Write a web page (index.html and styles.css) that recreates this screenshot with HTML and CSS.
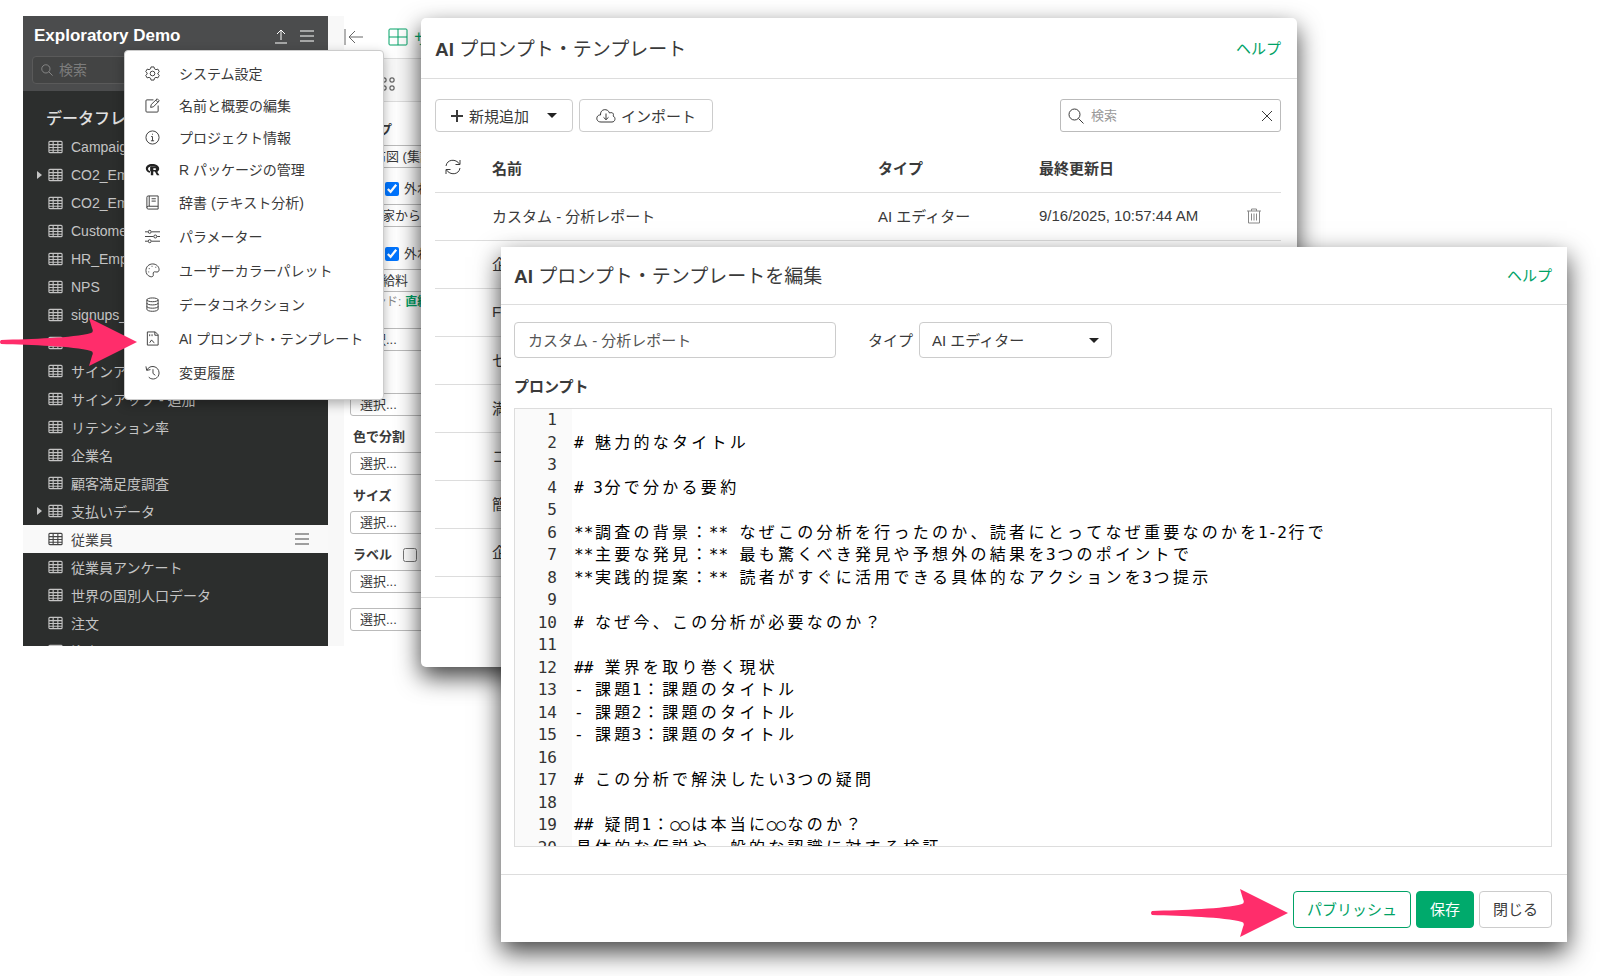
FILE: index.html
```html
<!DOCTYPE html>
<html lang="ja">
<head>
    <meta charset="UTF-8">
    <meta name="viewport" content="width=device-width, initial-scale=1.0">
    <title>AI プロンプト・テンプレート</title>
    <link rel="stylesheet" href="styles.css">
</head>
<body>
    <svg class="sprite" aria-hidden="true">
        <symbol id="i-table" viewBox="0 0 16 14">
            <rect x="1" y="1" width="14" height="12" rx="1"/>
            <path d="M1 4.5h14M1 7.5h14M1 10.5h14M5.5 1v12M10.5 1v12"/>
        </symbol>
        <symbol id="i-search" viewBox="0 0 16 16">
            <circle cx="6.5" cy="6.5" r="5.5"/><path d="M10.5 10.5l5 5"/>
        </symbol>
        <symbol id="i-arrow" viewBox="0 0 138 50">
            <path d="M2 23C32 22 74 21 92 16Q95 15 93 11L90 1L138 25L90 49L93 39Q95 35 92 34C74 29 32 28 2 27Q0 25 2 23Z"/>
        </symbol>
    </svg>

    <!-- Project window -->
    <div class="project">
        <aside class="sidebar">
            <div class="sidebar-head">
                <div class="sidebar-title">
                    <h2>Exploratory Demo</h2>
                    <button class="icon-button" aria-label="アップロード">
                        <svg width="14" height="16" viewBox="0 0 14 16"><path d="M7 12V2M3 6l4-4 4 4M1 15h12"/></svg>
                    </button>
                    <button class="icon-button" aria-label="メニュー">
                        <svg width="14" height="12" viewBox="0 0 14 12"><path d="M0 1h14M0 6h14M0 11h14"/></svg>
                    </button>
                </div>
                <label class="sidebar-search">
                    <svg width="12" height="12"><use href="#i-search"/></svg>
                    <input type="text" placeholder="検索" aria-label="検索">
                </label>
            </div>
            <h3>データフレーム</h3>
            <ul class="frames">
                <li><svg><use href="#i-table"/></svg>Campaign</li>
                <li class="has-children"><svg><use href="#i-table"/></svg>CO2_Emission</li>
                <li><svg><use href="#i-table"/></svg>CO2_Emission</li>
                <li><svg><use href="#i-table"/></svg>Customer</li>
                <li><svg><use href="#i-table"/></svg>HR_Employee</li>
                <li><svg><use href="#i-table"/></svg>NPS</li>
                <li><svg><use href="#i-table"/></svg>signups_</li>
                <li><svg><use href="#i-table"/></svg></li>
                <li><svg><use href="#i-table"/></svg>サインアップ</li>
                <li><svg><use href="#i-table"/></svg>サインアップ - 追加</li>
                <li><svg><use href="#i-table"/></svg>リテンション率</li>
                <li><svg><use href="#i-table"/></svg>企業名</li>
                <li><svg><use href="#i-table"/></svg>顧客満足度調査</li>
                <li class="has-children"><svg><use href="#i-table"/></svg>支払いデータ</li>
                <li class="selected"><svg><use href="#i-table"/></svg>従業員
                    <button class="icon-button" aria-label="従業員のメニュー">
                        <svg width="14" height="12" viewBox="0 0 14 12"><path d="M0 1h14M0 6h14M0 11h14"/></svg>
                    </button>
                </li>
                <li><svg><use href="#i-table"/></svg>従業員アンケート</li>
                <li><svg><use href="#i-table"/></svg>世界の国別人口データ</li>
                <li><svg><use href="#i-table"/></svg>注文</li>
                <li><svg><use href="#i-table"/></svg>注文</li>
            </ul>
        </aside>

        <section class="chart">
            <div class="chart-tabs">
                <svg width="20" height="16" viewBox="0 0 20 16"><path d="M1 0v16M19 8H5M11 2L5 8l6 6"/></svg>
                <span class="chart-tab">
                    <svg width="20" height="18" viewBox="0 0 20 18"><rect x="1" y="1" width="18" height="16" rx="1"/><path d="M1 9h18M10 1v16"/></svg>
                    サ
                </span>
            </div>
            <div class="chart-tools">
                <svg width="14" height="14" viewBox="0 0 14 14"><rect x="1" y="1" width="4" height="4" rx="1"/><rect x="9" y="1" width="4" height="4" rx="1"/><rect x="1" y="9" width="4" height="4" rx="1"/><rect x="9" y="9" width="4" height="4" rx="1"/></svg>
            </div>
            <div class="chart-form">
                <label class="row tall" for="chart-type">タイプ</label>
                <select id="chart-type"><option>散布図 (集計)</option></select>
                <label class="row check indent"><input type="checkbox" checked>外れ値</label>
                <select class="with-icon" aria-label="X軸"><option>家からの距離</option></select>
                <label class="row check indent tall"><input type="checkbox" checked>外れ値</label>
                <select class="with-icon" aria-label="Y軸"><option>給料</option></select>
                <div class="row trend">トレンド: <b>直線</b></div>
                <select aria-label="計算"><option>選択...</option></select>
                <div class="row tall"></div>
                <select aria-label="繰り返し"><option>選択...</option></select>
                <label class="row" for="color-by">色で分割</label>
                <select id="color-by"><option>選択...</option></select>
                <label class="row" for="size-by">サイズ</label>
                <select id="size-by"><option>選択...</option></select>
                <div class="row check"><label for="label-by">ラベル</label><input type="checkbox" aria-label="ラベルを表示"></div>
                <select id="label-by"><option>選択...</option></select>
                <select class="spaced" aria-label="追加ラベル"><option>選択...</option></select>
            </div>
        </section>
    </div>

    <!-- Project menu -->
    <ul class="menu">
        <li><svg viewBox="0 0 16 16"><path d="M6.4 1h3.2l.5 2 1.6.9 2-.6 1.5 2.8L13.700 7.500v1L15.200 10l-1.500 2.700-2-.6-1.600.9-.5 2H6.400l-.5-2-1.600-.9-2 .6L.8 10l1.500-1.500v-1L.8 6l1.500-2.700 2 .6 1.600-.9z"/><circle cx="8" cy="8" r="2.500"/></svg>システム設定</li>
        <li><svg viewBox="0 0 16 16"><path d="M9 2H2Q1 2 1 3v11q0 1 1 1h11q1 0 1-1V8M6 10l.6-3L13 .8 15.200 3 9 9.400zM11.500 2.200l2.200 2.300"/></svg>名前と概要の編集</li>
        <li><svg viewBox="0 0 16 16"><circle cx="8" cy="8" r="7"/><path d="M6.500 7H8v4.500M6.300 11.500h3.400M7.500 4.500h1"/></svg>プロジェクト情報</li>
        <li><svg class="r-icon" viewBox="0 0 18 16"><path class="solid" fill-rule="evenodd" d="M8.500 1.500C13.300 1.500 17 3.800 17 7c0 1.600-.9 2.900-2.300 3.900L13 10V5H6v6.900C2.900 11.100 1 9.300 1 7c0-3.200 3.200-5.500 7.500-5.500zM9 4C6 4 3.600 5.300 3.600 7S5 9.800 7 10.200V4.800h7.500C13.300 4.300 11.200 4 9 4z"/><path class="solid" fill-rule="evenodd" d="M7 4.500h6c3.600 0 3.700 4.600 1 5.300L17.300 15h-3l-2.400-4.500h-2V15H7zM10 6.500v2.200h2.500c1.500 0 1.500-2.200 0-2.200z"/></svg>R パッケージの管理</li>
        <li><svg viewBox="0 0 16 16"><path d="M3.500 1H14v14H3.500Q2 15 2 13.500v-11Q2 1 3.500 1zM4.500 1v11M2 13.500Q2 12 3.500 12H14M7 4h4.500M7 6.500h4.500"/></svg>辞書 (テキスト分析)</li>
        <li><svg viewBox="0 0 16 16"><path d="M0 3h3M7 3h9M0 8h9M13 8h3M0 13h3M7 13h9"/><circle cx="5" cy="3" r="1.600"/><circle cx="11" cy="8" r="1.600"/><circle cx="5" cy="13" r="1.600"/></svg>パラメーター</li>
        <li><svg viewBox="0 0 16 16"><path d="M5.500 14.500C2.500 13.500 1 11 1 8c0-4 3.200-7 7.200-7S15 4 15 7c0 2.300-1.500 3-3.500 2.500C9.500 9 8.300 10 8.800 12s-.8 3.200-3.300 2.500z"/><path d="M4 6h1M7 3.500h1M11 4.500h1M3.500 9.500h1"/></svg>ユーザーカラーパレット</li>
        <li><svg viewBox="0 0 16 16"><ellipse cx="8" cy="3" rx="6" ry="2"/><path d="M2 3v10c0 3 12 3 12 0V3M2 6.500c0 2.600 12 2.600 12 0M2 10c0 2.600 12 2.600 12 0"/></svg>データコネクション</li>
        <li><svg viewBox="0 0 16 16"><path d="M2.500 1H11l3 3v11H2.500zM10.500 1v3.500H14M5 12.500l2-3 1.500 2 1.500 1M5 3.500v2M7.500 3.500v2"/></svg>AI プロンプト・テンプレート</li>
        <li><svg viewBox="0 0 16 16"><path d="M2 5.500C5-1 15 1 15 8.500c0 6-7 8.500-11 4.500M1 1.500l.8 4.200 4-.8M8.500 4.500V9l2.500 2"/></svg>変更履歴</li>
    </ul>

    <!-- Template list -->
    <section class="dialog list-dialog">
        <header>
            <h1><b>AI</b> プロンプト・テンプレート</h1>
            <a href="#">ヘルプ</a>
        </header>
        <div class="list-body">
            <div class="toolbar">
                <button class="button add-button">
                    <svg width="12" height="12" viewBox="0 0 12 12"><path class="plus" d="M6 0v12M0 6h12"/></svg>
                    新規追加
                    <i class="caret"></i>
                </button>
                <button class="button import-button">
                    <svg width="20" height="14" viewBox="0 0 20 14"><path d="M5 13C-1 13 0 5.500 4.500 6 4-.5 12-1 13.500 4c4-1.500 4.500 2 3.500 3 3 1 2.500 6-1 6zM10 4.500v6M7.500 8.300L10 10.700l2.500-2.400"/></svg>
                    インポート
                </button>
                <label class="search">
                    <svg width="16" height="16"><use href="#i-search"/></svg>
                    <input type="text" placeholder="検索" aria-label="テンプレートを検索">
                    <button class="icon-button" aria-label="クリア">
                        <svg width="10" height="10" viewBox="0 0 10 10"><path d="M0 0l10 10M10 0L0 10"/></svg>
                    </button>
                </label>
            </div>
            <table>
                <thead>
                    <tr>
                        <th class="col-icon">
                            <button class="icon-button" aria-label="更新">
                                <svg width="16" height="16" viewBox="0 0 16 16"><path d="M1 7C2 0 11-.5 14.500 5M15 1v4.500h-4.500M15 9c-1 7-10 7.500-13.500 2M1 15v-4.500h4.500"/></svg>
                            </button>
                        </th>
                        <th>名前</th>
                        <th class="col-type">タイプ</th>
                        <th class="col-date">最終更新日</th>
                        <th class="col-action"></th>
                    </tr>
                </thead>
                <tbody>
                    <tr>
                        <td></td>
                        <td>カスタム - 分析レポート</td>
                        <td>AI エディター</td>
                        <td>9/16/2025, 10:57:44 AM</td>
                        <td>
                            <button class="icon-button trash" aria-label="削除">
                                <svg width="14" height="16" viewBox="0 0 14 16"><path d="M0 3h14M4.500 3V1h5v2M1.500 3v12h11V3M4.500 5.500v7M7 5.500v7M9.500 5.500v7"/></svg>
                            </button>
                        </td>
                    </tr>
                    <tr><td></td><td>企</td><td></td><td></td><td></td></tr>
                    <tr><td></td><td>F</td><td></td><td></td><td></td></tr>
                    <tr><td></td><td>セ</td><td></td><td></td><td></td></tr>
                    <tr><td></td><td>満</td><td></td><td></td><td></td></tr>
                    <tr><td></td><td>コ</td><td></td><td></td><td></td></tr>
                    <tr><td></td><td>簡</td><td></td><td></td><td></td></tr>
                    <tr><td></td><td>企</td><td></td><td></td><td></td></tr>
                </tbody>
            </table>
        </div>
        <footer></footer>
    </section>

    <!-- Template editor -->
    <section class="dialog edit-dialog">
        <header>
            <h1><b>AI</b> プロンプト・テンプレートを編集</h1>
            <a href="#">ヘルプ</a>
        </header>
        <div class="edit-body">
            <div class="fields">
                <input class="name-input" type="text" value="カスタム - 分析レポート" aria-label="名前">
                <label for="template-type">タイプ</label>
                <span class="type-select">
                    <select id="template-type"><option>AI エディター</option></select>
                    <i class="caret"></i>
                </span>
            </div>
            <div class="prompt-label" id="prompt-label">プロンプト</div>
            <div class="editor">
                <div class="gutter" id="gutter"></div>
                <div class="code" id="code" role="textbox" aria-multiline="true" aria-labelledby="prompt-label" contenteditable="true" spellcheck="false"></div>
            </div>
        </div>
        <footer>
            <button class="button publish">パブリッシュ</button>
            <button class="button save">保存</button>
            <button class="button">閉じる</button>
        </footer>
    </section>

    <svg class="arrow arrow-menu"><use href="#i-arrow"/></svg>
    <svg class="arrow arrow-publish"><use href="#i-arrow"/></svg>

    <script src="script.js"></script>
</body>
</html>
```

FILE: styles.css
```css
* {
    box-sizing: border-box;
}
body {
    margin: 0;
    min-height: 100vh;
    position: relative;
    overflow: hidden;
    background: #fff;
    color: #3a3a3a;
    font-family: "Liberation Sans", "Noto Sans CJK JP", sans-serif;
    font-size: 15px;
}
h1, h2, h3, ul {
    margin: 0;
    padding: 0;
    list-style: none;
}
button, input, select {
    font: inherit;
    color: inherit;
}
svg {
    flex: none;
    fill: none;
    stroke: currentColor;
    stroke-width: 1;
}
.sprite {
    position: absolute;
    width: 0;
    height: 0;
}
.icon-button {
    display: flex;
    padding: 0;
    border: none;
    background: none;
}
.caret {
    border: 5px solid transparent;
    border-top-color: #222;
    border-bottom: none;
}

/* project window */
.project {
    position: absolute;
    left: 23px;
    top: 16px;
    display: flex;
    height: 630px;
    overflow: hidden;
}
.sidebar {
    width: 305px;
    background: #2c2e2d;
    color: #c4c4c4;
    font-size: 14px;
}
.sidebar-head {
    height: 75px;
    padding: 8px 14px 0 9px;
    background: #4b4c4d;
}
.sidebar-title {
    display: flex;
    align-items: center;
    gap: 12px;
    height: 24px;
    padding-left: 2px;
    color: #fff;
}
.sidebar-title h2 {
    flex: 1;
    font-size: 17px;
}
.sidebar-search {
    display: flex;
    align-items: center;
    gap: 6px;
    height: 28px;
    margin-top: 8px;
    padding-left: 8px;
    border: 1px solid #5a5a5a;
    border-radius: 4px;
    background: #434444;
    color: #999;
}
.sidebar-search input {
    border: none;
    background: none;
    padding: 0;
}
.sidebar-search input::placeholder {
    color: #7c7c7c;
}
.sidebar h3 {
    height: 42px;
    padding: 16px 0 0 23px;
    font-size: 16px;
    font-weight: 500;
    line-height: 24px;
    color: #e0e0e0;
}
.frames li {
    position: relative;
    display: flex;
    align-items: center;
    height: 28px;
    padding-left: 25px;
    white-space: nowrap;
}
.frames svg {
    width: 15px;
    height: 14px;
    margin-right: 8px;
    stroke-width: 1.2;
}
.frames .has-children::before {
    content: "";
    position: absolute;
    left: 14px;
    border: 4px solid transparent;
    border-left: 5px solid #c4c4c4;
    border-right: none;
}
.frames .selected {
    background: #f9f9f9;
    color: #444;
}
.selected .icon-button {
    margin-left: auto;
    margin-right: 11px;
}
.selected .icon-button svg {
    width: 14px;
    height: 12px;
}

/* chart settings */
.chart {
    width: 180px;
    border-left: 16px solid #f8f8f8;
    font-size: 13px;
    white-space: nowrap;
}
.chart-tabs {
    display: flex;
    align-items: center;
    gap: 24px;
    height: 43px;
    border-bottom: 1px solid #ddd;
    color: #666;
}
.chart-tab {
    display: flex;
    align-items: center;
    gap: 6px;
    color: #00a266;
    font-size: 15px;
}
.chart-tools {
    display: flex;
    align-items: center;
    height: 43px;
    padding: 8px 0 0 37px;
    background: #f8f8f8;
    border-bottom: 1px solid #ddd;
}
.chart-form {
    padding: 1px 0 0 6px;
}
.chart-form select {
    display: block;
    width: 150px;
    height: 23px;
    padding: 0 9px;
    border: 1px solid #bbb;
    border-radius: 3px;
    background: #fff;
    appearance: none;
}
.chart-form .with-icon {
    padding-left: 31px;
}
.chart-form .spaced {
    margin-top: 15px;
}
.row {
    display: flex;
    align-items: flex-end;
    height: 36px;
    padding: 0 3px 5px;
    font-weight: bold;
    line-height: 20px;
}
.row.tall {
    height: 42px;
}
.row.check {
    gap: 11px;
}
.row.indent {
    gap: 5px;
    padding-left: 35px;
    font-weight: normal;
}
.row input {
    width: 14px;
    height: 14px;
    margin: 3px 0;
}
.row.trend {
    align-items: flex-start;
    gap: 4px;
    padding: 0;
    font-size: 12px;
    font-weight: normal;
    color: #888;
}
.trend b {
    color: #00a266;
}

/* project menu */
.menu {
    position: absolute;
    left: 124px;
    top: 50px;
    width: 260px;
    padding: 6px 16px 10px;
    border: 1px solid #ccc;
    border-radius: 4px;
    background: #fff;
    box-shadow: 0 4px 12px rgba(0, 0, 0, 0.3);
    font-size: 14px;
}
.menu li {
    display: flex;
    align-items: center;
    gap: 19px;
    height: 32px;
    padding-left: 4px;
    white-space: nowrap;
}
.menu li:nth-child(n+5) {
    height: 34px;
}
.menu svg {
    width: 15px;
    height: 15px;
}
.menu .solid {
    fill: #222;
    stroke: none;
}

/* dialogs */
.dialog {
    position: absolute;
    background: #fff;
    box-shadow: 0 10px 24px rgba(0, 0, 0, 0.75);
}
.dialog header {
    display: flex;
    align-items: center;
    justify-content: space-between;
    border-bottom: 1px solid #ddd;
}
.dialog h1 {
    font-size: 19px;
    font-weight: normal;
}
.dialog a {
    color: #00a266;
    text-decoration: none;
}
.button {
    display: flex;
    align-items: center;
    justify-content: center;
    height: 33px;
    padding: 0 13px 2px;
    border: 1px solid #ccc;
    border-radius: 4px;
    background: #fff;
    white-space: nowrap;
}
.list-dialog {
    left: 421px;
    right: 303px;
    top: 18px;
    border-radius: 5px;
}
.list-dialog header {
    height: 61px;
    padding: 0 16px 2px 14px;
}
.list-body {
    padding: 20px 16px 0 14px;
}
.toolbar {
    display: flex;
    gap: 6px;
}
.add-button {
    gap: 6px;
    padding: 0 15px;
}
.add-button .caret {
    margin-left: 12px;
}
.plus {
    stroke-width: 2;
}
.import-button {
    gap: 5px;
    padding: 0 16px;
}
.search {
    display: flex;
    align-items: center;
    gap: 7px;
    width: 221px;
    height: 33px;
    margin-left: auto;
    padding: 0 8px 0 7px;
    border: 1px solid #bbb;
    border-radius: 3px;
}
.search input {
    flex: 1;
    min-width: 0;
    padding: 0;
    border: none;
    font-size: 13px;
}
.search input::placeholder {
    color: #999;
}
table {
    width: 100%;
    margin-top: 12px;
    border-collapse: collapse;
    table-layout: fixed;
}
th, td {
    height: 48px;
    padding: 0 0 1px;
    border-bottom: 1px solid #ddd;
    text-align: left;
    white-space: nowrap;
}
.col-icon {
    width: 57px;
    padding-left: 10px;
}
.col-type {
    width: 161px;
}
.col-date {
    width: 208px;
}
.col-action {
    width: 34px;
}
.trash {
    color: #888;
}
.list-dialog footer {
    height: 70px;
    margin-top: 20px;
    border-top: 1px solid #ddd;
}

.edit-dialog {
    left: 501px;
    right: 33px;
    top: 247px;
}
.edit-dialog header {
    height: 58px;
    padding: 0 15px 3px 13px;
}
.edit-body {
    padding: 17px 15px 27px 13px;
}
.fields {
    display: flex;
    align-items: center;
}
.name-input {
    width: 322px;
    height: 36px;
    margin-right: 32px;
    padding: 0 13px 2px;
    border: 1px solid #ccc;
    border-radius: 4px;
    color: #555;
}
.fields label {
    padding-bottom: 2px;
}
.type-select {
    display: grid;
    align-items: center;
    margin-left: 6px;
}
.type-select select {
    grid-area: 1 / 1;
    width: 193px;
    height: 36px;
    padding: 0 12px;
    border: 1px solid #ccc;
    border-radius: 4px;
    background: #fff;
    appearance: none;
}
.type-select .caret {
    grid-area: 1 / 1;
    justify-self: end;
    margin-right: 13px;
    pointer-events: none;
}
.prompt-label {
    margin: 17px 0 9px;
    font-weight: bold;
    line-height: 24px;
}
.editor {
    display: flex;
    height: 439px;
    border: 1px solid #ddd;
    overflow: hidden;
    color: #000;
    font-family: "DejaVu Sans Mono", "Noto Sans CJK JP", monospace;
    font-size: 16px;
}
.gutter, .code {
    display: grid;
    flex: none;
    grid-template-rows: repeat(20, 1fr);
    height: 450px;
    line-height: 22px;
}
.gutter {
    width: 57px;
    padding-right: 15px;
    background: #fafafa;
    color: #333;
    text-align: right;
}
.code {
    flex: 1;
    padding-left: 2px;
    white-space: pre;
    outline: none;
}
/* full-width characters take two columns */
.cjk {
    display: inline-block;
    width: 2ch;
    text-align: center;
}
.edit-dialog footer {
    display: flex;
    justify-content: flex-end;
    gap: 5px;
    padding: 16px 15px 14px;
    border-top: 1px solid #ddd;
}
.edit-dialog footer .button {
    height: 37px;
}
.edit-dialog footer .publish {
    border-color: #00a266;
    color: #00a266;
}
.edit-dialog footer .save {
    border-color: #00aa6c;
    background: #00aa6c;
    color: #fff;
}

/* callout arrows */
.arrow {
    position: absolute;
    width: 138px;
    height: 50px;
    fill: #ff2d6b;
    stroke: none;
}
.arrow-menu {
    left: -1px;
    top: 317px;
}
.arrow-publish {
    right: 312px;
    top: 888px;
}
```

FILE: script.js
```javascript
const lines = [
    "",
    "# 魅力的なタイトル",
    "",
    "# 3分で分かる要約",
    "",
    "**調査の背景：** なぜこの分析を行ったのか、読者にとってなぜ重要なのかを1-2行で",
    "**主要な発見：** 最も驚くべき発見や予想外の結果を3つのポイントで",
    "**実践的提案：** 読者がすぐに活用できる具体的なアクションを3つ提示",
    "",
    "# なぜ今、この分析が必要なのか？",
    "",
    "## 業界を取り巻く現状",
    "- 課題1：課題のタイトル",
    "- 課題2：課題のタイトル",
    "- 課題3：課題のタイトル",
    "",
    "# この分析で解決したい3つの疑問",
    "",
    "## 疑問1：○○は本当に○○なのか？",
    "具体的な仮説や一般的な認識に対する検証"
];

const gutter = document.getElementById("gutter");
const code = document.getElementById("code");

lines.forEach((text, i) => {
    const number = document.createElement("div");
    number.textContent = i + 1;
    gutter.appendChild(number);

    const line = document.createElement("div");
    line.innerHTML = text.replace(/[\u3001-\u9fff\uff01-\uff60]/g, '<span class="cjk">$&</span>');
    code.appendChild(line);
});
```
